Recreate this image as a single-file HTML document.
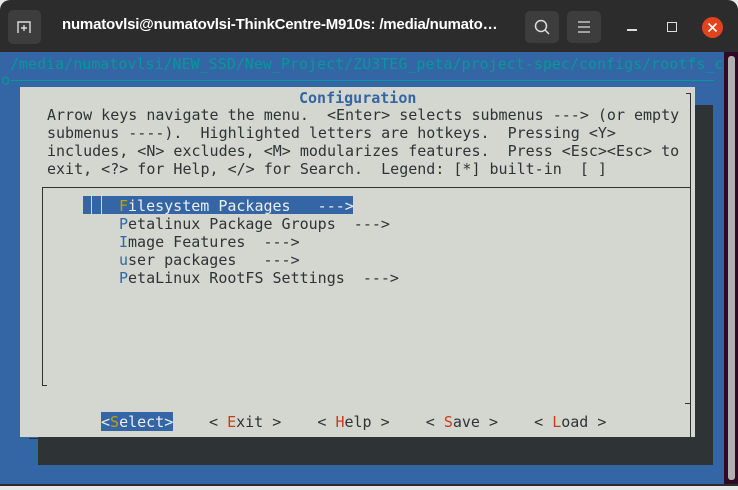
<!DOCTYPE html>
<html><head><meta charset="utf-8"><style>
*{margin:0;padding:0;box-sizing:border-box}
body{width:738px;height:490px;background:#e8e8e8;position:relative;overflow:hidden;font-family:"DejaVu Sans Mono","Liberation Mono",monospace}
.win{position:absolute;left:0;top:0;width:738px;height:486px;background:#2c2c2c;border-radius:10px 10px 0 0}
.btn{position:absolute;background:#3d3d3d;border-radius:5px}
.title{position:absolute;left:62px;top:16px;color:#fff;font:bold 15px "Liberation Sans",sans-serif;letter-spacing:-0.2px}
.term{position:absolute;left:0;top:52px;width:724px;height:432px;background:#3465a4}
.sb{position:absolute;left:724px;top:52px;width:14px;height:432px;background:#300a24}
.thumb{position:absolute;left:728px;top:56px;width:7px;height:424px;background:#b0b0b0;border-radius:3px}
.t{position:absolute;font-size:15px;line-height:18px;white-space:pre;color:#2e3436}
.dlg{position:absolute;left:20px;top:87px;width:675px;height:350px;background:#d3d7cf}
.sh{position:absolute;left:38px;top:105px;width:675px;height:360px;background:#2e3436}
.r{color:#cc3a1a}
</style></head><body>
<div class="win"></div>
<div class="btn" style="left:8px;top:10px;width:33px;height:34px"></div>
<svg style="position:absolute;left:16px;top:19px" width="16" height="16"><path d="M2 14V3h12v11M8 6v6M5 9h6" stroke="#ddd" stroke-width="1.4" fill="none"/></svg>
<div class="title">numatovlsi@numatovlsi-ThinkCentre-M910s: /media/numato…</div>
<div class="btn" style="left:525px;top:11px;width:34px;height:32px"></div>
<svg style="position:absolute;left:533px;top:18px" width="18" height="18"><circle cx="8" cy="8" r="5.5" stroke="#ddd" stroke-width="1.5" fill="none"/><path d="M12 12l4 4" stroke="#ddd" stroke-width="1.5"/></svg>
<div class="btn" style="left:567px;top:11px;width:34px;height:32px"></div>
<svg style="position:absolute;left:577px;top:20px" width="14" height="14"><path d="M1 2h12M1 7h12M1 12h12" stroke="#ddd" stroke-width="1.3"/></svg>
<div style="position:absolute;left:627px;top:29px;width:10px;height:1.5px;background:#ddd"></div>
<div style="position:absolute;left:667px;top:22px;width:10px;height:10px;border:1.5px solid #ddd"></div>
<div style="position:absolute;left:702px;top:17px;width:21px;height:21px;border-radius:50%;background:#e2431d"></div>
<svg style="position:absolute;left:707px;top:22px" width="11" height="11"><path d="M1.5 1.5l8 8M9.5 1.5l-8 8" stroke="#fff" stroke-width="1.6"/></svg>
<div class="term"></div>
<div class="sb"></div><div class="thumb"></div>
<div class="t" style="left:10px;top:55px;color:#06989a">/media/numatovlsi/NEW_SSD/New_Project/ZU3TEG_peta/project-spec/configs/rootfs_c</div>
<div class="t" style="left:1px;top:71px;color:#06989a">o</div>
<div style="position:absolute;left:10px;top:80px;width:704px;height:1px;background:#06989a"></div>
<div class="sh"></div>
<div class="dlg"></div>
<div class="t" style="left:299px;top:89px;color:#3465a4;font-weight:bold">Configuration</div>
<div style="position:absolute;left:686px;top:93px;width:5px;height:346px;border-top:1px solid #2e3436;border-right:1px solid #2e3436"></div>
<div style="position:absolute;left:29px;top:438px;width:662px;height:1px;background:#2e3436"></div>
<div class="t" style="left:47px;top:106px">Arrow keys navigate the menu.  &lt;Enter&gt; selects submenus ---&gt; (or empty
submenus ----).  Highlighted letters are hotkeys.  Pressing &lt;Y&gt;
includes, &lt;N&gt; excludes, &lt;M&gt; modularizes features.  Press &lt;Esc&gt;&lt;Esc&gt; to
exit, &lt;?&gt; for Help, &lt;/&gt; for Search.  Legend: [*] built-in  [ ]</div>
<div style="position:absolute;left:42px;top:187px;width:649px;height:199px;border-left:1px solid #2e3436;border-top:1px solid #2e3436"></div>
<div style="position:absolute;left:42px;top:385px;width:5px;height:1px;background:#2e3436"></div>
<div style="position:absolute;left:685px;top:403px;width:6px;height:1px;background:#2e3436"></div>
<div style="position:absolute;left:83px;top:196px;width:270px;height:18px;background:#3465a4"></div>
<div style="position:absolute;left:91px;top:196px;width:1px;height:18px;background:#d3d7cf"></div>
<div style="position:absolute;left:101px;top:196px;width:1px;height:18px;background:#d3d7cf"></div>
<div class="t" style="left:119px;top:197px;color:#eeeeec"><span style="color:#c4a000">F</span>ilesystem Packages   ---&gt;</div>
<div class="t" style="left:119px;top:215px"><span style="color:#3465a4">P</span>etalinux Package Groups  ---&gt;
<span style="color:#3465a4">I</span>mage Features  ---&gt;
<span style="color:#3465a4">u</span>ser packages   ---&gt;
<span style="color:#3465a4">P</span>etaLinux RootFS Settings  ---&gt;</div>
<div style="position:absolute;left:101px;top:412px;width:72px;height:19px;background:#3465a4"></div>
<div class="t" style="left:101px;top:413px;color:#eeeeec">&lt;<span style="color:#c4a000">S</span>elect&gt;</div>
<div class="t" style="left:209px;top:413px">&lt; <span class="r">E</span>xit &gt;    &lt; <span class="r">H</span>elp &gt;    &lt; <span class="r">S</span>ave &gt;    &lt; <span class="r">L</span>oad &gt;</div>
</body></html>
